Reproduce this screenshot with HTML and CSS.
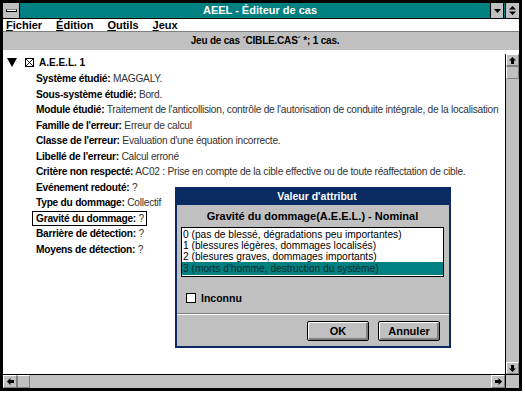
FILE: index.html
```html
<!DOCTYPE html>
<html lang="fr">
<head>
<meta charset="utf-8">
<title>AEEL - Éditeur de cas</title>
<link rel="stylesheet" href="styles.css">
</head>
<body>
<div class="window">
  <div class="titlebar">
    <div class="sysmenu"><span class="sysbar"></span></div>
    <div class="title">AEEL - Éditeur de cas</div>
    <div class="tbtn"><svg width="9" height="9" viewBox="0 0 9 9"><path d="M1 3h7L4.5 7z" fill="#000"/></svg></div>
    <div class="tbtn"><svg width="9" height="11" viewBox="0 0 9 11"><path d="M1 4.5h7L4.5 1zM1 6.5h7L4.5 10z" fill="#000"/></svg></div>
  </div>
  <div class="menubar">
    <span class="menu"><u>F</u>ichier</span>
    <span class="menu"><u>É</u>dition</span>
    <span class="menu"><u>O</u>utils</span>
    <span class="menu"><u>J</u>eux</span>
  </div>
  <div class="subtitle">Jeu de cas ´CIBLE.CAS´ *; 1 cas.</div>
  <div class="main">
    <div class="pane">
      <div class="root">
        <svg class="tri" width="10" height="9" viewBox="0 0 10 9"><path d="M0 0h10L5 9z" fill="#000"/></svg>
        <svg class="xbox" width="9" height="9" viewBox="0 0 9 9"><rect x="0.5" y="0.5" width="8" height="8" fill="#fff" stroke="#000"/><path d="M1 1l7 7M8 1l-7 7" stroke="#000" stroke-width="0.9"/></svg>
        <span class="rootname">A.E.E.L. 1</span>
      </div>
      <div class="attrs">
        <div class="row"><b>Système étudié:</b> MAGGALY.</div>
        <div class="row"><b>Sous-système étudié:</b> Bord.</div>
        <div class="row"><b>Module étudié:</b> Traitement de l'anticollision, contrôle de l'autorisation de conduite intégrale, de la localisation</div>
        <div class="row"><b>Famille de l'erreur:</b> Erreur de calcul</div>
        <div class="row"><b>Classe de l'erreur:</b> Evaluation d'une équation incorrecte.</div>
        <div class="row"><b>Libellé de l'erreur:</b> Calcul erroné</div>
        <div class="row"><b>Critère non respecté:</b> AC02 : Prise en compte de la cible effective ou de toute réaffectation de cible.</div>
        <div class="row"><b>Evénement redouté:</b> ?</div>
        <div class="row"><b>Type du dommage:</b> Collectif</div>
        <div class="row"><span class="focus"><b>Gravité du dommage:</b> ?</span></div>
        <div class="row"><b>Barrière de détection:</b> ?</div>
        <div class="row"><b>Moyens de détection:</b> ?</div>
      </div>
    </div>
    <div class="vscroll">
      <div class="sbtn"><svg width="7" height="7" viewBox="0 0 7 7"><path d="M3.5 0L7 3.5H5V7H2V3.5H0z" fill="#000"/></svg></div>
      <div class="thumb"></div>
      <div class="track"></div>
      <div class="sbtn"><svg width="7" height="7" viewBox="0 0 7 7"><path d="M3.5 7L7 3.5H5V0H2V3.5H0z" fill="#000"/></svg></div>
    </div>
  </div>
  <div class="hrow">
    <div class="hscroll">
      <div class="sbtn"><svg width="7" height="7" viewBox="0 0 7 7"><path d="M0 3.5L3.5 0V2H7V5H3.5V7z" fill="#000"/></svg></div>
      <div class="thumb"></div>
      <div class="track"></div>
      <div class="sbtn"><svg width="7" height="7" viewBox="0 0 7 7"><path d="M7 3.5L3.5 0V2H0V5H3.5V7z" fill="#000"/></svg></div>
    </div>
    <div class="corner"></div>
  </div>
</div>

<div class="dialog">
  <div class="dtitle">Valeur d'attribut</div>
  <div class="dbody">
    <div class="dhead">Gravité du dommage(A.E.E.L.) - Nominal</div>
    <div class="list">
      <div class="item">0 (pas de blessé, dégradations peu importantes)</div>
      <div class="item">1 (blessures légères, dommages localisés)</div>
      <div class="item">2 (blesures graves, dommages importants)</div>
      <div class="item sel">3 (morts d'homme, destruction du système)</div>
    </div>
    <label class="check"><span class="cbox"></span>Inconnu</label>
    <div class="sep"></div>
    <div class="buttons">
      <div class="btn">OK</div>
      <div class="btn">Annuler</div>
    </div>
  </div>
</div>
</body>
</html>
```
FILE: styles.css
```css
* { box-sizing: border-box; }
body {
  margin: 0;
  background: #fff;
  font-family: "Liberation Sans", Arial, sans-serif;
  width: 525px;
  height: 396px;
  overflow: hidden;
  position: relative;
}
.window {
  width: 522px;
  height: 391px;
  border: 3px solid #000;
  display: flex;
  flex-direction: column;
  background: #fff;
}
.titlebar {
  height: 16px;
  background: #008080;
  display: flex;
  align-items: stretch;
  border-bottom: 1px solid #000;
}
.sysmenu {
  width: 17px;
  background: #c0c0c0;
  border-right: 1px solid #000;
  display: flex;
  align-items: center;
  justify-content: center;
}
.sysbar {
  width: 11px;
  height: 3px;
  background: #fff;
  border: 1px solid #000;
  border-top-color: #808080;
}
.title {
  flex: 1;
  text-align: center;
  color: #fff;
  font-weight: bold;
  font-size: 11px;
  line-height: 15px;
  padding-left: 10px;
}
.tbtn {
  width: 14px;
  margin-right: 1px;
  background: #c0c0c0;
  border: 1px solid #000;
  border-top: 0;
  border-bottom: 0;
  display: flex;
  align-items: center;
  justify-content: center;
}
.tbtn:last-child { margin-right: 0; border-right: 0; }
.menubar {
  height: 12px;
  display: flex;
  font-size: 11px;
  font-weight: bold;
  line-height: 12px;
  color: #000;
  padding-left: 3px;
}
.menu { margin-right: 14px; }
.menu u { text-decoration: underline; text-underline-offset: 1px; }
.subtitle {
  height: 20px;
  background: #c0c0c0;
  border-top: 1px solid #808080;
  border-bottom: 1px solid #fff;
  text-align: center;
  font-size: 10px;
  letter-spacing: -0.2px;
  font-weight: bold;
  line-height: 18px;
  padding-left: 8px;
}
.main {
  height: 323px;
  display: flex;
}
.pane {
  flex: 1;
  overflow: hidden;
  padding: 5px 0 0 4px;
  white-space: nowrap;
}
.root {
  display: flex;
  align-items: center;
  height: 12px;
}
.tri { margin-right: 8px; }
.xbox { margin-right: 5px; }
.rootname { font-weight: bold; font-size: 10px; }
.attrs {
  padding-left: 29px;
  padding-top: 3px;
  font-size: 10.2px;
  letter-spacing: -0.25px;
}
.row {
  height: 15.5px;
  line-height: 15.5px;
  color: #333;
}
.row b { color: #000; }
.focus {
  border: 1px solid #000;
  padding: 1px 2px 1px 3px;
  margin-left: -4px;
}
.vscroll {
  width: 14px;
  margin-top: 3px;
  background: #c0c0c0;
  border-left: 1px solid #000;
  display: flex;
  flex-direction: column;
}
.sbtn {
  width: 13px;
  height: 12px;
  background: #c0c0c0;
  border: 1px solid #fff;
  border-right-color: #808080;
  border-bottom-color: #808080;
  display: flex;
  align-items: center;
  justify-content: center;
  flex: none;
}
.vscroll .thumb {
  height: 13px;
  background: #c0c0c0;
  border: 1px solid #fff;
  border-right-color: #808080;
  border-bottom-color: #808080;
  border-top: 1px solid #808080;
}
.track { flex: 1; background: #c0c0c0; }
.hrow {
  height: 14px;
  display: flex;
  border-top: 1px solid #000;
}
.hscroll {
  flex: 1;
  display: flex;
  background: #c0c0c0;
}
.hscroll .sbtn { height: 13px; width: 14px; }
.hscroll .thumb {
  width: 13px;
  background: #c0c0c0;
  border: 1px solid #fff;
  border-right-color: #808080;
  border-bottom-color: #808080;
  border-left: 1px solid #808080;
}
.corner {
  width: 14px;
  background: #c0c0c0;
  border-left: 1px solid #000;
}
.dialog {
  position: absolute;
  left: 175px;
  top: 187px;
  width: 276px;
  height: 161px;
  border: 2px solid #0c2a62;
  background: #c0c0c0;
  display: flex;
  flex-direction: column;
}
.dtitle {
  height: 16px;
  background: #0c2a62;
  color: #fff;
  font-weight: bold;
  font-size: 10.5px;
  line-height: 15px;
  text-align: center;
  padding-left: 8px;
}
.dbody {
  flex: 1;
  display: flex;
  flex-direction: column;
  padding: 0 5px 0 4px;
}
.dhead {
  height: 22px;
  line-height: 22px;
  text-align: center;
  font-weight: bold;
  font-size: 11px;
}
.list {
  height: 50px;
  background: #fff;
  border: 1px solid #000;
  font-size: 10.2px;
  padding-top: 1px;
  overflow: hidden;
}
.item {
  height: 11px;
  line-height: 11px;
  padding-left: 1px;
  white-space: nowrap;
  color: #000;
}
.item.sel {
  background: #008080;
  color: #0a2e2e;
  height: 13px;
  line-height: 13px;
}
.check {
  display: flex;
  align-items: center;
  font-weight: bold;
  font-size: 10.5px;
  margin-top: 15px;
  padding-left: 5px;
  height: 11px;
}
.cbox {
  width: 10px;
  height: 10px;
  background: #fff;
  border: 1px solid #000;
  margin-right: 5px;
}
.sep {
  margin: 10px -5px 0 -4px;
  border-top: 1px solid #808080;
  border-bottom: 1px solid #fff;
}
.buttons {
  display: flex;
  justify-content: flex-end;
  gap: 9px;
  margin-top: 6px;
  padding-right: 4px;
}
.btn {
  height: 20px;
  background: #c0c0c0;
  border: 1px solid #000;
  box-shadow: inset 1px 1px 0 #fff, inset -2px -2px 0 #808080;
  font-weight: bold;
  font-size: 11px;
  line-height: 18px;
  text-align: center;
  width: 62px;
  border-radius: 2px;
}
```
